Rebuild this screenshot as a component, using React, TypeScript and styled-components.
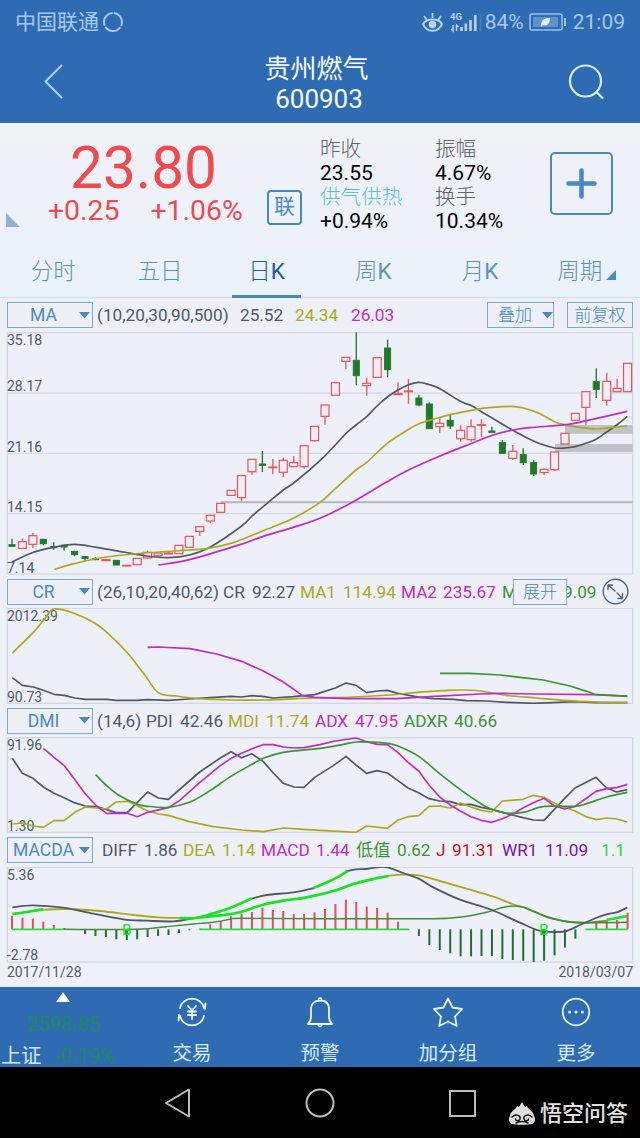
import React from "react";
import styled, { createGlobalStyle } from "styled-components";

const BLUE = "#2f6bb3";
const ACCENT = "#4a89bf";
const SLATE = "#505866";
const OLIVE = "#acaa1c";
const MAGENTA = "#c02cc0";
const GREEN = "#3d9432";
const LIME = "#17e51d";
const RED = "#e8555c";
const DEEP_GREEN = "#1f7a28";

const GlobalStyle = createGlobalStyle`
  * { box-sizing: border-box; }
  body { margin: 0; background: #eef1f8; }
  #root { font-family: Roboto, "Noto Sans CJK SC", sans-serif; }
`;

const Screen = styled.div`
  width: 640px;
  height: 1138px;
  display: flex;
  flex-direction: column;
  overflow: hidden;
  background: #edf1f8;
`;

const StatusBar = styled.div`
  height: 44px;
  display: flex;
  align-items: center;
  padding: 0 15px 0 15px;
  background: ${BLUE};
  color: #a5c8ee;
  font-size: 21px;
  line-height: 44px;
`;

const StatusRight = styled.div`
  margin-left: auto;
  display: flex;
  align-items: center;
`;

const TitleBar = styled.header`
  height: 79px;
  display: grid;
  grid-template-columns: 100px 1fr 100px;
  align-items: start;
  padding-top: 12px;
  background: ${BLUE};
  border-bottom: 1px solid #4c7198;
`;

const Title = styled.h1`
  margin: -2px 7px 0 0;
  padding-left: 0;
  text-align: center;
  color: #f3fbff;
  font-weight: 400;
  font-size: 26px;
  line-height: 30px;

  & > span {
    display: block;
    padding-left: 5px;
  }
`;

const TitleIcon = styled.svg<{ $left: number }>`
  display: block;
  margin: 3px 0 0 ${(p) => p.$left}px;
`;

const Quote = styled.section`
  height: 122px;
  display: flex;
  background: linear-gradient(#f1f2f5, #eef1f8 30%, #edf1f9);
`;

const Corner = styled.div`
  width: 47px;
  display: flex;
  align-items: flex-end;
  padding: 0 0 18px 6px;
`;

const PriceBlock = styled.div`
  width: 220px;
  padding-top: 16px;
  color: #e94b50;
`;

const Price = styled.div`
  padding-left: 23px;
  font-size: 58.5px;
  line-height: 58px;
  color: #f04a4d;
`;

const Changes = styled.div`
  display: flex;
  gap: 31px;
  padding-left: 1px;
  font-size: 28.4px;
  line-height: 28px;
  white-space: nowrap;
`;

const LinkBadge = styled.div`
  width: 35px;
  height: 35px;
  margin-top: 67px;
  border: 2px solid ${ACCENT};
  border-radius: 4px;
  color: ${ACCENT};
  font-size: 20.5px;
  line-height: 30px;
  text-align: center;
`;

const Facts = styled.div<{ $width: number; $left: number }>`
  width: ${(p) => p.$width}px;
  margin-left: ${(p) => p.$left}px;
  padding-top: 14px;
  font-size: 20.6px;
  line-height: 24px;
  color: #000;
  white-space: nowrap;
`;

const FactLabel = styled.div<{ $color?: string }>`
  color: ${(p) => p.$color ?? "#626468"};
  font-weight: 300;
  height: 24px;
`;

const FactValue = styled.div`
  font-size: 21px;
  height: 24px;
`;

const AddButton = styled.div`
  width: 63px;
  height: 63px;
  margin-top: 29px;
  display: grid;
  place-items: center;
  border: 2px solid ${ACCENT};
  border-radius: 5px;
`;

const Tabs = styled.nav`
  height: 53px;
  display: grid;
  grid-template-columns: repeat(6, 1fr);
  background: linear-gradient(#edf2f9, #e9f2fc);
  border-bottom: 1px solid #cddbe8;
`;

const Tab = styled.div<{ $active?: boolean }>`
  display: flex;
  justify-content: center;
  font-size: 22.5px;
  line-height: 52px;
  font-weight: 300;
  color: ${(p) => (p.$active ? "#20609a" : "#5f91be")};

  & > span {
    height: 53px;
    padding: 0 ${(p) => (p.$active ? 16 : 0)}px;
    border-bottom: ${(p) => (p.$active ? `3px solid ${ACCENT}` : "none")};
  }
  & b {
    font-weight: 400;
  }
  & > svg {
    margin: 25px 0 0 4px;
  }
`;

const Toolbar = styled.div<{ $height: number }>`
  position: relative;
  height: ${(p) => p.$height}px;
  display: flex;
  align-items: center;
  padding: 0 7px;
  background: #eef0f8;
  white-space: nowrap;
`;

const Picker = styled.div<{ $width: number }>`
  width: ${(p) => p.$width}px;
  height: 26px;
  display: flex;
  flex: none;
  align-items: center;
  justify-content: flex-end;
  padding-right: 2px;
  border: 1px solid #7fa9cf;
  color: ${ACCENT};
  font-size: 17.5px;
  line-height: 24px;

  & > span {
    flex: 1;
    text-align: center;
  }
`;

const TextButton = styled(Picker)<{ $left: number }>`
  margin-left: ${(p) => p.$left}px;
  padding-right: 0;
  font-weight: 300;
  font-size: 17px;
`;

const ExpandButton = styled(TextButton)`
  position: absolute;
  left: 513px;
  margin: 0;
  background: #eef0f8;
`;

const ZoomOut = styled.svg`
  position: absolute;
  left: 602px;
  top: 3px;
`;

const Readings = styled.div<{ $left: number }>`
  display: flex;
  align-items: baseline;
  height: 24px;
  margin-left: ${(p) => p.$left}px;
  font-size: 17.2px;
  line-height: 24px;
`;

const Reading = styled.span<{ $color: string; $width: number }>`
  flex: none;
  width: ${(p) => p.$width}px;
  color: ${(p) => p.$color};
`;

const Chart = styled.svg`
  display: block;
  flex: none;
`;

const Dates = styled.div`
  height: 24px;
  display: flex;
  justify-content: space-between;
  padding: 0 7px;
  color: #555d67;
  font-size: 14px;
  line-height: 19px;
  border-bottom: 1px solid #dbeefa;
`;

const BottomBar = styled.nav`
  height: 80px;
  display: grid;
  grid-template-columns: repeat(5, 128px);
  background: ${BLUE};
`;

const Action = styled.div`
  display: flex;
  flex-direction: column;
  align-items: center;
  padding-top: 9px;
  color: #d3ecff;
  font-size: 19.5px;
  line-height: 28px;

  & > svg {
    margin-bottom: 12px;
  }
`;

const IndexCell = styled.div`
  display: flex;
  flex-direction: column;
  padding-top: 5px;
  font-size: 20.2px;
  color: #1c8a5a;
`;

const IndexValue = styled.div`
  padding: 9px 0 0 27px;
  line-height: 26px;
`;

const IndexRow = styled.div`
  display: flex;
  gap: 14px;
  padding: 6px 0 0 1px;
  line-height: 26px;

  & > b {
    font-weight: 400;
    color: #cdeaff;
  }
`;

const SystemBar = styled.footer`
  height: 71px;
  display: flex;
  align-items: center;
  padding-left: 163px;
  background: #000;
`;

const SystemIcon = styled.svg<{ $left?: number }>`
  margin-left: ${(p) => p.$left ?? 0}px;
  flex: none;
`;

const Watermark = styled.div`
  display: flex;
  align-items: center;
  margin: 22px 0 0 31px;
  gap: 4px;
  color: #e0e0e0;
  font-size: 22px;
  font-weight: 500;
  line-height: 24px;
  white-space: nowrap;
`;

/* Candle: [rising, body top, body bottom, high, low], three units to a pixel */
type Candle = [0 | 1, number, number, number, number];

const candles: Candle[] = [
  [0, 659, 664, 641, 664], [1, 650, 670, 640, 670], [1, 632, 658, 624, 669], [0, 643, 656, 641, 661],
  [0, 665, 668, 652, 674], [0, 661, 666, 660, 677], [0, 679, 689, 677, 694], [0, 695, 700, 694, 709],
  [0, 701, 704, 696, 706], [1, 704, 707, 703, 708], [0, 706, 720, 706, 720], [1, 721, 723, 720, 724],
  [1, 700, 719, 700, 719], [1, 682, 699, 677, 703], [1, 684, 692, 684, 695], [1, 684, 687, 682, 688],
  [1, 661, 686, 661, 686], [1, 634, 667, 634, 667], [1, 605, 619, 605, 632], [1, 571, 588, 571, 594],
  [1, 535, 562, 535, 562], [1, 496, 511, 496, 511], [1, 452, 518, 452, 529], [1, 403, 440, 403, 450],
  [0, 417, 421, 378, 441], [1, 426, 428, 402, 448], [1, 406, 442, 398, 456], [1, 413, 425, 394, 425],
  [1, 362, 425, 362, 431], [1, 304, 347, 304, 350], [1, 240, 274, 240, 299], [1, 173, 211, 173, 211],
  [1, 97, 109, 97, 133], [0, 106, 152, 22, 181], [1, 175, 182, 158, 212], [1, 98, 157, 98, 157],
  [0, 69, 134, 44, 157], [1, 206, 209, 172, 209], [1, 198, 200, 161, 236], [0, 219, 240, 209, 244],
  [0, 237, 311, 232, 311], [1, 295, 305, 280, 323], [0, 286, 303, 266, 312], [1, 316, 341, 301, 350],
  [1, 305, 344, 283, 350], [1, 299, 301, 283, 336], [0, 318, 322, 305, 323], [0, 353, 385, 345, 385],
  [1, 379, 400, 360, 405], [0, 389, 413, 370, 420], [0, 413, 447, 406, 453], [1, 433, 443, 430, 450],
  [1, 381, 434, 381, 439], [1, 325, 357, 325, 357], [1, 265, 286, 265, 286], [1, 200, 247, 200, 299],
  [0, 170, 193, 130, 219], [1, 169, 226, 143, 242], [1, 190, 200, 161, 200], [1, 115, 200, 115, 200],
];

const macdBars = [
  242, 248, 251, 260, 270, 279, 283, 297, 303, 306, 313, 315, 313, 306, 303, 300, 294, 286, 281, 268,
  258, 244, 236, 231, 218, 225, 228, 237, 237, 232, 222, 207, 194, 201, 215, 219, 233, 260, 283, 303,
  330, 345, 355, 364, 364, 363, 363, 372, 375, 377, 381, 377, 361, 338, 311, 284, 262, 258, 255, 233,
];
const barX = (i: number) => 36 + i * 31.3;

type Pt = [number, number];

const smooth = (pts: Pt[]) => {
  let d = `M${pts[0][0]} ${pts[0][1]}`;
  for (let i = 0; i < pts.length - 1; i++) {
    const a = pts[Math.max(0, i - 1)];
    const b = pts[i];
    const c = pts[i + 1];
    const e = pts[Math.min(pts.length - 1, i + 2)];
    d += `C${b[0] + (c[0] - a[0]) / 6} ${b[1] + (c[1] - a[1]) / 6} ${c[0] - (e[0] - b[0]) / 6} ${c[1] - (e[1] - b[1]) / 6} ${c[0]} ${c[1]}`;
  }
  return d;
};

const straight = (pts: Pt[]) => "M" + pts.map((p) => p.join(" ")).join("L");

const Line = ({ pts, color, width = 5, curved }: { pts: Pt[]; color: string; width?: number; curved?: boolean }) => (
  <path d={curved ? smooth(pts) : straight(pts)} stroke={color} strokeWidth={width} fill="none" strokeLinejoin="round" />
);

const Frame = ({ top, bottom }: { top: number; bottom: number }) => (
  <rect x={22} y={top} width={1876} height={bottom - top} fill="#edf0f8" stroke="#d3d9e3" strokeWidth={4} />
);

const AxisText = ({ y, children }: { y: number; children: string }) => (
  <text x={21} y={y} fontSize={42} fill="#505a66">{children}</text>
);

const Caret = () => (
  <svg width="11" height="7" viewBox="0 0 11 7"><path d="M0 0h11L5.500 6.500z" fill={ACCENT} /></svg>
);

const PriceChart = () => (
  <Chart width="640" height="243" viewBox="0 21 1920 729">
    <Frame top={23} bottom={747} />
    {[204, 385, 566].map((y) => (
      <path key={y} d={`M22 ${y}H1898`} stroke="#d6dbe3" strokeWidth={4} />
    ))}
    <path d="M662 532H1898" stroke="#b4b7be" strokeWidth={6} />
    <path d="M1695 300H1898V326H1695zM1665 357H1898V381H1665z" fill="#c0c2c8" />
    <AxisText y={60}>35.18</AxisText>
    <AxisText y={199}>28.17</AxisText>
    <AxisText y={380}>21.16</AxisText>
    <AxisText y={562}>14.15</AxisText>
    <AxisText y={743}>7.14</AxisText>
    {candles.map(([up, top, bottom, high, low], i) => {
      const x = barX(i);
      const color = up ? RED : DEEP_GREEN;
      return (
        <g key={i} stroke={color} strokeWidth={4}>
          <path d={`M${x} ${high}V${top}M${x} ${bottom}V${low}`} />
          <rect x={x - (up ? 12 : 9)} y={top} width={up ? 24 : 18} height={bottom - top} fill={up ? "#f2ecf4" : color} strokeWidth={up ? 3.6 : 3} />
        </g>
      );
    })}
    <Line curved color={SLATE} pts={[[36, 711], [100, 682], [160, 667], [223, 658], [290, 667], [370, 681], [440, 693], [505, 698], [568, 690], [631, 666], [725, 603], [756, 573], [805, 532], [850, 495], [885, 471], [960, 407], [1003, 363], [1038, 325], [1068, 300], [1100, 275], [1131, 243], [1162, 216], [1194, 195], [1224, 180], [1256, 172], [1285, 178], [1320, 191], [1381, 229], [1415, 242], [1444, 260], [1490, 287], [1537, 315], [1580, 338], [1625, 358], [1664, 369], [1694, 369], [1725, 365], [1760, 354], [1788, 343], [1820, 321], [1850, 300], [1882, 274]]} />
    <Line curved color={OLIVE} pts={[[163, 733], [223, 716], [300, 699], [400, 687], [520, 678], [620, 671], [700, 653], [790, 617], [880, 580], [960, 532], [1005, 492], [1068, 435], [1100, 412], [1162, 355], [1224, 314], [1260, 295], [1303, 282], [1351, 269], [1430, 253], [1480, 247], [1535, 244], [1570, 249], [1615, 264], [1664, 290], [1694, 299], [1740, 307], [1788, 312], [1830, 308], [1882, 303]]} />
    <Line curved color={MAGENTA} pts={[[475, 720], [568, 704], [720, 659], [790, 634], [880, 607], [960, 580], [1060, 530], [1160, 471], [1230, 433], [1320, 393], [1410, 357], [1480, 330], [1540, 315], [1590, 308], [1700, 299], [1760, 287], [1882, 259]]} />
  </Chart>
);

const CrChart = () => (
  <Chart width="640" height="96" viewBox="0 99 1920 288">
    <Frame top={100} bottom={385} />
    <AxisText y={138}>2012.39</AxisText>
    <AxisText y={380}>90.73</AxisText>
    <Line color={SLATE} pts={[[37, 308], [67, 331], [100, 336], [130, 346], [162, 358], [192, 361], [225, 369], [256, 373], [320, 373], [350, 376], [410, 376], [442, 374], [505, 376], [568, 372], [630, 368], [693, 364], [725, 366], [756, 362], [787, 364], [820, 369], [880, 365], [944, 359], [1006, 339], [1038, 324], [1068, 331], [1100, 353], [1131, 348], [1162, 346], [1194, 355], [1260, 367], [1300, 371], [1360, 373], [1400, 377], [1460, 378], [1520, 382], [1600, 385], [1660, 383], [1720, 380], [1788, 383], [1882, 383]]} />
    <Line curved color={OLIVE} pts={[[37, 234], [100, 172], [135, 130], [162, 102], [220, 114], [285, 145], [330, 181], [380, 231], [430, 294], [475, 353], [530, 363], [600, 371], [693, 375], [800, 375], [940, 369], [1060, 366], [1170, 360], [1250, 352], [1330, 347], [1381, 345], [1440, 348], [1520, 361], [1610, 369], [1700, 377], [1790, 381], [1882, 383]]} />
    <Line color={MAGENTA} pts={[[443, 217], [475, 216], [570, 221], [650, 237], [725, 259], [790, 288], [850, 321], [908, 362], [944, 367], [1040, 371], [1190, 371], [1290, 365], [1440, 357], [1500, 355], [1600, 357], [1780, 359], [1882, 363]]} />
    <Line color={GREEN} pts={[[1320, 295], [1410, 295], [1500, 300], [1560, 307], [1630, 315], [1710, 333], [1760, 349], [1788, 359], [1882, 364]]} />
  </Chart>
);

const DmiChart = () => (
  <Chart width="640" height="96" viewBox="0 96 1920 288">
    <Frame top={98} bottom={382} />
    <AxisText y={136}>91.96</AxisText>
    <AxisText y={378}>1.30</AxisText>
    <Line color={SLATE} pts={[[37, 160], [67, 205], [99, 220], [130, 246], [162, 265], [192, 278], [223, 293], [256, 303], [290, 305], [320, 314], [348, 323], [382, 323], [412, 292], [443, 261], [475, 279], [505, 283], [537, 255], [599, 201], [661, 159], [693, 140], [725, 158], [755, 146], [790, 170], [820, 204], [850, 235], [882, 246], [912, 247], [944, 217], [1000, 182], [1038, 154], [1068, 180], [1100, 205], [1131, 197], [1162, 204], [1194, 227], [1224, 249], [1256, 263], [1287, 281], [1319, 288], [1351, 290], [1381, 299], [1413, 298], [1444, 307], [1475, 313], [1507, 322], [1537, 330], [1569, 338], [1600, 345], [1632, 346], [1694, 280], [1725, 249], [1788, 217], [1820, 249], [1850, 261], [1882, 254]]} />
    <Line color={OLIVE} pts={[[37, 357], [67, 354], [99, 363], [130, 367], [162, 347], [192, 347], [225, 322], [256, 306], [320, 312], [348, 291], [385, 289], [412, 302], [443, 318], [475, 327], [505, 331], [568, 350], [640, 365], [725, 375], [790, 380], [850, 369], [912, 373], [960, 376], [1068, 382], [1100, 363], [1162, 370], [1194, 345], [1224, 335], [1256, 332], [1287, 304], [1319, 303], [1351, 309], [1381, 294], [1413, 306], [1444, 316], [1475, 321], [1507, 288], [1569, 283], [1600, 271], [1632, 277], [1674, 300], [1725, 318], [1756, 334], [1788, 344], [1820, 339], [1850, 342], [1882, 351]]} />
    <Line color={MAGENTA} pts={[[130, 130], [162, 157], [192, 181], [223, 222], [256, 267], [290, 303], [320, 325], [382, 325], [412, 335], [443, 322], [505, 308], [537, 288], [599, 233], [661, 182], [693, 160], [725, 145], [756, 131], [790, 119], [820, 119], [850, 126], [880, 129], [912, 128], [960, 119], [1005, 108], [1068, 99], [1100, 110], [1131, 118], [1162, 119], [1194, 143], [1224, 172], [1256, 198], [1287, 240], [1319, 276], [1351, 300], [1381, 318], [1413, 335], [1444, 346], [1475, 352], [1507, 341], [1537, 328], [1569, 309], [1600, 293], [1632, 280], [1664, 303], [1694, 312], [1725, 304], [1756, 282], [1788, 259], [1820, 251], [1850, 248], [1882, 238]]} />
    <Line curved color={GREEN} pts={[[287, 209], [320, 242], [355, 270], [410, 297], [443, 304], [505, 307], [568, 292], [630, 257], [693, 214], [756, 178], [787, 161], [850, 142], [960, 130], [1030, 118], [1068, 111], [1131, 112], [1162, 115], [1194, 123], [1256, 154], [1319, 206], [1381, 254], [1444, 297], [1475, 313], [1507, 322], [1537, 325], [1580, 320], [1632, 304], [1725, 304], [1760, 296], [1820, 276], [1882, 262]]} />
  </Chart>
);

const MacdChart = () => (
  <Chart width="640" height="96" viewBox="0 96 1920 288">
    <Frame top={97} bottom={381} />
    <AxisText y={134}>5.36</AxisText>
    <AxisText y={376}>-2.78</AxisText>
    {macdBars.map((y, i) => (
      <path key={i} d={`M${barX(i)} 283V${y}`} stroke={y < 283 ? "#df5057" : "#256b35"} strokeWidth={6} />
    ))}
    <path d="M36 283H192M598 283H1228M1757 283H1882" stroke="#2bdc32" strokeWidth={5} />
    <Line curved color={OLIVE} width={5.5} pts={[[130, 224], [200, 222], [300, 228], [400, 240], [475, 247], [540, 249]]} />
    <Line curved color={OLIVE} width={5.5} pts={[[1160, 123], [1210, 119], [1260, 122], [1320, 138], [1400, 161], [1480, 185], [1537, 207], [1570, 216]]} />
    <Line curved color="#629c27" width={5.5} pts={[[1570, 216], [1610, 233], [1660, 251], [1710, 261], [1760, 263], [1820, 257]]} />
    <Line curved color="#478b35" width={4.4} pts={[[192, 283], [410, 283], [500, 275], [580, 267], [640, 262], [690, 253], [725, 250], [960, 251], [1300, 251], [1360, 248], [1410, 242], [1460, 232], [1505, 218], [1540, 213], [1575, 218], [1620, 238], [1660, 252], [1710, 261], [1760, 263], [1882, 262]]} />
    <Line curved color={SLATE} width={5.5} pts={[[37, 217], [100, 211], [190, 218], [280, 236], [370, 253], [440, 257], [520, 259], [590, 248]]} />
    <Line curved color={SLATE} width={5.5} pts={[[756, 191], [800, 180], [880, 172], [944, 159]]} />
    <Line curved color={SLATE} width={5.5} pts={[[1038, 109], [1068, 103], [1100, 102], [1131, 97], [1162, 97], [1210, 114], [1256, 131], [1300, 157], [1380, 194], [1450, 216], [1490, 231], [1560, 263], [1615, 286], [1664, 291], [1700, 288], [1740, 270], [1788, 249], [1820, 238], [1850, 232], [1882, 218]]} />
    <Line curved color={LIME} width={8} pts={[[37, 237], [80, 231], [130, 223]]} />
    <Line curved color={LIME} width={8} pts={[[540, 249], [590, 249], [640, 235], [690, 219], [756, 190]]} />
    <Line curved color={LIME} width={8} pts={[[590, 248], [680, 239], [725, 230], [787, 210], [850, 197], [920, 187], [1000, 168], [1060, 147], [1120, 132], [1165, 123]]} />
    <Line curved color={LIME} width={8} pts={[[940, 159], [975, 145], [1010, 128], [1043, 108]]} />
    <Line color={LIME} width={8} pts={[[1820, 255], [1882, 243]]} />
    <path d="M375 284h10v14h-10zM1626 284h10v14h-10z" fill="#12a81b" />
    <text x={366} y={299} fontSize={46} fill={LIME}>B</text>
    <text x={1617} y={299} fontSize={46} fill={LIME}>B</text>
  </Chart>
);

const stroke = { fill: "none", strokeLinecap: "round", strokeLinejoin: "round" } as const;

type Item = [string, number, string];

const ReadingRow = ({ left, items }: { left: number; items: Item[] }) => (
  <Readings $left={left}>
    {items.map(([text, width, color], i) => (
      <Reading key={i} $width={width} $color={color}>{text}</Reading>
    ))}
  </Readings>
);

const IndicatorPicker = ({ name }: { name: string }) => (
  <Picker $width={86}><span>{name}</span><Caret /></Picker>
);

const TopStatus = () => (
  <StatusBar>
    中国联通
    <svg width="22" height="22" viewBox="0 0 22 22" style={{ marginLeft: 3 }}>
      <circle cx="11" cy="11" r="9" fill="none" stroke="#a5c8ee" strokeWidth="2" strokeDasharray="17.350 1.500" transform="rotate(-85 11 11)" />
    </svg>
    <StatusRight>
      <svg width="64" height="24" viewBox="0 0 64 24" fill="none" stroke="#b5d2ee">
        <path d="M2 14c3.500-6 15.500-6 19 0-3.500 9-15.500 9-19 0z" strokeWidth="2" />
        <circle cx="11.500" cy="14.500" r="3.800" fill="#b5d2ee" stroke="none" />
        <path d="M11.500 3v5M3 6l3 4M20 6l-3 4" strokeWidth="1.800" />
        <text x="29" y="9.500" fontSize="9.500" fontWeight="700" fill="#b5d2ee" stroke="none">4G</text>
        <path d="M32 15v6l-2-2M35.500 21v-6l2 2" strokeWidth="1.500" />
        <path d="M40.500 17v4M44.800 13.500v7.500M49.500 10v11M54.300 5v16" strokeWidth="2.600" />
        <path d="M59.500 3v18" stroke="#487fbe" strokeWidth="1.500" />
      </svg>
      <span>84%</span>
      <svg width="38" height="20" viewBox="0 0 38 20" fill="none" stroke="#9dc1e6" style={{ margin: "0 6px 0 5px" }}>
        <rect x="1" y="2" width="32" height="16" rx="2" strokeWidth="1.500" />
        <rect x="4" y="5" width="25" height="10" fill="#5f93cb" stroke="none" />
        <path d="M12 15c0-6 2-9 9-9 0 6-4 9-7 7l3-3" fill="#e2effa" stroke="none" />
        <path d="M36 6v8" strokeWidth="2" />
      </svg>
      <span>21:09</span>
    </StatusRight>
  </StatusBar>
);

export default function App() {
  return (
    <>
      <GlobalStyle />
      <Screen>
        <TopStatus />
        <TitleBar>
          <TitleIcon $left={40} width="38" height="44" viewBox="0 0 38 44" {...stroke} stroke="#a9d0f3" strokeWidth="2">
            <path d="M21.500 6.500L5.500 22.500l16 16" />
          </TitleIcon>
          <Title>贵州燃气<span>600903</span></Title>
          <TitleIcon $left={28} width="40" height="44" viewBox="0 0 40 44" {...stroke} stroke="#d3efff" strokeWidth="2.200">
            <circle cx="17.500" cy="22" r="15.500" />
            <path d="M28.500 33l6 6" />
          </TitleIcon>
        </TitleBar>
        <Quote>
          <Corner><svg width="14" height="14"><path d="M0 0v14h14z" fill="#91b3d3" /></svg></Corner>
          <PriceBlock>
            <Price>23.80</Price>
            <Changes><span>+0.25</span><span>+1.06%</span></Changes>
          </PriceBlock>
          <LinkBadge>联</LinkBadge>
          <Facts $left={18} $width={115}>
            <FactLabel>昨收</FactLabel><FactValue>23.55</FactValue>
            <FactLabel $color="#5fbfe4">供气供热</FactLabel><FactValue>+0.94%</FactValue>
          </Facts>
          <Facts $left={0} $width={115}>
            <FactLabel>振幅</FactLabel><FactValue>4.67%</FactValue>
            <FactLabel>换手</FactLabel><FactValue>10.34%</FactValue>
          </Facts>
          <AddButton>
            <svg width="31" height="31" viewBox="0 0 31 31" {...stroke} stroke="#4788c8" strokeWidth="4.500"><path d="M15.500 2.500v26M2.500 15.500h26" /></svg>
          </AddButton>
        </Quote>
        <Tabs>
          <Tab><span>分时</span></Tab>
          <Tab><span>五日</span></Tab>
          <Tab $active><span>日<b>K</b></span></Tab>
          <Tab><span>周<b>K</b></span></Tab>
          <Tab><span>月<b>K</b></span></Tab>
          <Tab><span>周期</span><svg width="10" height="10"><path d="M10 0v10H0z" fill={ACCENT} /></svg></Tab>
        </Tabs>
        <Toolbar $height={34}>
          <IndicatorPicker name="MA" />
          <ReadingRow left={4} items={[["(10,20,30,90,500)", 143, SLATE], ["25.52", 55, SLATE], ["24.34", 56, OLIVE], ["26.03", 49, MAGENTA]]} />
          <TextButton $left={87} $width={67}><span>叠加</span><Caret /></TextButton>
          <TextButton $left={13} $width={66}><span>前复权</span></TextButton>
        </Toolbar>
        <PriceChart />
        <Toolbar $height={33}>
          <IndicatorPicker name="CR" />
          <ReadingRow left={4} items={[["(26,10,20,40,62)", 126, SLATE], ["CR", 29, SLATE], ["92.27", 48, SLATE], ["MA1", 43, OLIVE], ["114.94", 58, OLIVE], ["MA2", 42, MAGENTA], ["235.67", 59, MAGENTA], ["M", 61, GREEN], ["9.09", 34, GREEN]]} />
          <ExpandButton $left={0} $width={54}><span>展开</span></ExpandButton>
          <ZoomOut width="27" height="27" viewBox="0 0 27 27" {...stroke} stroke="#50647c" strokeWidth="1.400">
            <circle cx="13.500" cy="13.500" r="12.300" />
            <path d="M6 11.500V7h4.500M6 7l7 6M20.500 15.500v5H16M20.500 20.500L15 15" />
          </ZoomOut>
        </Toolbar>
        <CrChart />
        <Toolbar $height={33}>
          <IndicatorPicker name="DMI" />
          <ReadingRow left={4} items={[["(14,6)", 49, SLATE], ["PDI", 34, SLATE], ["42.46", 48, SLATE], ["MDI", 38, OLIVE], ["11.74", 49, OLIVE], ["ADX", 40, MAGENTA], ["47.95", 49, MAGENTA], ["ADXR", 50, GREEN], ["40.66", 50, GREEN]]} />
        </Toolbar>
        <DmiChart />
        <Toolbar $height={34}>
          <IndicatorPicker name="MACDA" />
          <ReadingRow left={9} items={[["DIFF", 42, SLATE], ["1.86", 39, SLATE], ["DEA", 39, OLIVE], ["1.14", 39, OLIVE], ["MACD", 55, MAGENTA], ["1.44", 40, MAGENTA], ["低值", 41, GREEN], ["0.62", 39, GREEN], ["J", 16, "#c81420"], ["91.31", 50, "#c81420"], ["WR1", 43, "#7612b8"], ["11.09", 56, "#7612b8"], ["1.1", 25, "#25dc3a"]]} />
        </Toolbar>
        <MacdChart />
        <Dates><span>2017/11/28</span><span>2018/03/07</span></Dates>
        <BottomBar>
          <IndexCell>
            <svg width="128" height="10"><path d="M63 0l7 10H56z" fill="#fff" /></svg>
            <IndexValue>2598.85</IndexValue>
            <IndexRow><b>上证</b><span>-0.19%</span></IndexRow>
          </IndexCell>
          <Action>
            <svg width="32" height="32" viewBox="0 0 32 32" {...stroke} stroke="#e4f7ff" strokeWidth="1.800">
              <path d="M4 12C7-.500 25-.500 28 12M29.500 7.500L29 13M28 20c-3 12.500-21 12.500-24 0M2.500 24.500L3 19M12 10l4 4.500 4-4.500M16 14.500V23M12 15.500h8M12 19h8" />
            </svg>
            交易
          </Action>
          <Action>
            <svg width="32" height="32" viewBox="0 0 32 32" {...stroke} stroke="#e4f7ff" strokeWidth="1.800">
              <path d="M4 28h24c-2-2-3-3-3-7v-8c0-5-3-8.500-9-8.500S7 8 7 13v8c0 4-1 5-3 7z" />
              <path d="M14.500 4c0-2.500 3-2.500 3 0M14.500 29.500c.5 1.200 2.500 1.200 3 0" />
            </svg>
            预警
          </Action>
          <Action>
            <svg width="32" height="32" viewBox="0 0 32 32" {...stroke} stroke="#e4f7ff" strokeWidth="1.800">
              <path d="M16 2.500l4.500 9 9.500 1.500-7 7.500 1.700 9.500L16 25.500 7.300 30 9 20.500 2 13l9.500-1.500z" />
            </svg>
            加分组
          </Action>
          <Action>
            <svg width="32" height="32" viewBox="0 0 32 32" {...stroke} stroke="#e4f7ff" strokeWidth="1.800">
              <circle cx="16" cy="16" r="13.300" />
              <path d="M9.700 16h.01M16 16h.01M22.300 16h.01" strokeWidth="3" />
            </svg>
            更多
          </Action>
        </BottomBar>
        <SystemBar>
          <SystemIcon width="30" height="34" viewBox="0 0 30 34" {...stroke} stroke="#bcbcbc" strokeWidth="2">
            <path d="M26 3.500v27L3 17z" />
          </SystemIcon>
          <SystemIcon $left={111} width="32" height="34" viewBox="0 0 32 34" {...stroke} stroke="#bcbcbc" strokeWidth="2">
            <circle cx="16" cy="17" r="13.500" />
          </SystemIcon>
          <SystemIcon $left={111} width="30" height="34" viewBox="0 0 30 34" {...stroke} stroke="#bcbcbc" strokeWidth="2">
            <rect x="3" y="5" width="25" height="25" />
          </SystemIcon>
          <Watermark>
            <svg width="28" height="24" viewBox="0 0 28 24">
              <path d="M2 14C2 9 8 8 9 4l2 1 3-5 3 5 2-1c1 4 7 5 7 10 2 3 1 7-2 8-3 1-17 1-20 0-3-1-4-5-2-8z" fill="#dedede" />
              <path d="M4 15c4-4 9-1 8 2-1 2.500-4.500 2-4.500 0M24 15c-4-4-9-1-8 2 1 2.500 4.500 2 4.500 0M8 21c4-2 8-2 12 0" {...stroke} stroke="#111" strokeWidth="1.500" />
            </svg>
            悟空问答
          </Watermark>
        </SystemBar>
      </Screen>
    </>
  );
}
